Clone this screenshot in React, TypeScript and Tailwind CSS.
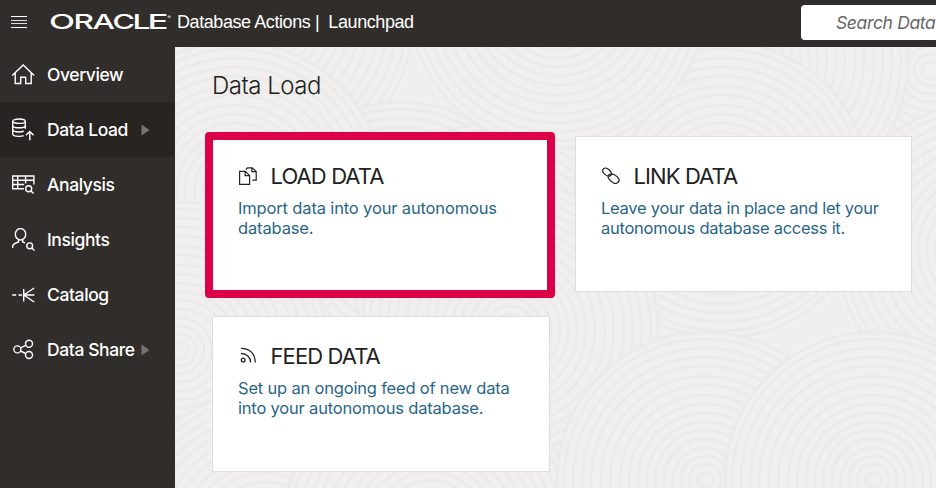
import type { ReactNode } from 'react';

const RINGS = [8, 16, 24, 32, 41, 50, 58, 67, 76, 85, 95, 104, 114, 123, 132, 141];

const SWIRLS = [
  { x: 265, y: 20 }, { x: 400, y: 250 }, { x: 235, y: 190 }, { x: 930, y: 70 },
  { x: 760, y: 60 }, { x: 500, y: 270 }, { x: 722, y: 190 },
  { x: 557, y: 0 }, { x: 985, y: 250 }, { x: 180, y: 350 }, { x: 510, y: 330 }, { x: 265, y: 540 },
  { x: 430, y: 530 }, { x: 705, y: 480 }, { x: 873, y: 480 },
];

function Backdrop() {
  return (
    <svg className="absolute inset-0 h-full w-full" viewBox="175 47 761 441" fill="#f0efed" stroke="#ebeae8" strokeWidth="2.500" aria-hidden="true">
      {SWIRLS.map((s) => (
        <g key={`${s.x}-${s.y}`}>
          <circle cx={s.x} cy={s.y} r="148" />
          {RINGS.map((r) => (
            <circle key={r} cx={s.x} cy={s.y} r={r} fill="none" />
          ))}
        </g>
      ))}
    </svg>
  );
}

function Icon({ children, size = 24, width = 1.4 }: { children: ReactNode; size?: number; width?: number }) {
  return (
    <svg width={size} height={size} viewBox={`0 0 ${size} ${size}`} fill="none" stroke="currentColor" strokeWidth={width} className="shrink-0" aria-hidden="true">
      {children}
    </svg>
  );
}

const icons = {
  overview: (
    <Icon><path d="M1.200 12.500 12.200 2l11 10.500M4.200 10v10.500h5.500v-6.300h5v6.300h5.500V10" /></Icon>
  ),
  load: (
    <Icon>
      <ellipse cx="8" cy="3.200" rx="6.300" ry="2.200" />
      <path d="M1.700 3.200v12.600c0 1.600 2.600 2.600 6.300 2.600 1.800 0 3.500-.2 4.600-.7M14.300 3.200v7.600M1.700 7.400c0 1.400 2.600 2.400 6.300 2.400s6.300-1 6.300-2.400M1.700 11.600c0 1.400 2.600 2.400 6.300 2.400 2 0 3.700-.3 4.800-.8M18.800 22.300v-8.500M15 17.200l3.800-3.700 3.800 3.700" />
    </Icon>
  ),
  analysis: (
    <Icon>
      <path d="M13 15.700H1.700V3h21.200v8.500M1.700 7.200h21.200M1.700 11.500h11.400M6.700 3v12.700M14.600 3v7.500" />
      <circle cx="17.700" cy="15.700" r="3" /><path d="m19.900 17.900 2.700 2.700" />
    </Icon>
  ),
  insights: (
    <Icon>
      <ellipse cx="9.500" cy="6.300" rx="5.200" ry="5.700" />
      <path d="M1.700 20v-1.700c0-1.900 2-3.100 5.800-4.300v-2.400M11.700 11.600v2.400l2.300.9" />
      <circle cx="18.700" cy="17.800" r="2.900" /><path d="m20.800 19.900 2.700 2.600" />
    </Icon>
  ),
  catalog: (
    <Icon><path d="M1.200 12h4M7.500 12h3.500M12.700 6v12.500M12.700 12h10.700M23.200 5l-10.400 7 10.400 7" /></Icon>
  ),
  share: (
    <Icon>
      <circle cx="6.400" cy="11.400" r="3.500" /><circle cx="18" cy="5.700" r="3.500" /><circle cx="18" cy="17" r="3.500" />
      <path d="m9.500 9.900 5.200-2.600M9.500 13l5.200 2.500" />
    </Icon>
  ),
  files: (
    <Icon size={20} width={1.2}>
      <path d="M1.600 5.400h5.700l4.300 4v8.900h-10zM7.100 5.400v4.300h4.500M8 3.500 9.500 1.800h4.700l4 3.600v8.800h-4M13.900 1.800v3.900h4.300" />
    </Icon>
  ),
  link: (
    <Icon size={20} width={1.200}>
      <path d="M7.800 9.700 6.500 9.600C5.400 9.400 1.700 6.500 1.600 5 1.400 2.700 3.500 1 5.700 2c1.300.6 4 3 4.600 4.100 1 2-.8 3.900-2.600 3.700" transform="translate(0 .3)" />
      <path d="M10.500 8.500c-2.600-.8-4.700 1.500-3.700 3.600.7 1.400 3.800 4.200 5.200 5 3.200 1.800 6.600-1.300 5.300-4-.7-1.400-3.200-3.500-4.400-4.100-.8-.5-1.700-.7-2.400-.5Z" transform="translate(.5 -.2)" />
    </Icon>
  ),
  feed: (
    <Icon size={20} width={1.300}>
      <circle cx="5.200" cy="14" r="1.900" />
      <path d="M3 7.500c5.600 0 9.600 3.700 9.600 9M3 2.300c8.800 0 14.300 5.500 14.300 14.200" />
    </Icon>
  ),
};

const NAV = [
  { label: 'Overview', icon: icons.overview },
  { label: 'Data Load', icon: icons.load, active: true, arrow: true, spacing: 'gap-[13px]' },
  { label: 'Analysis', icon: icons.analysis },
  { label: 'Insights', icon: icons.insights },
  { label: 'Catalog', icon: icons.catalog },
  { label: 'Data Share', icon: icons.share, arrow: true, spacing: 'gap-1.5' },
];

const CARDS = [
  { title: 'LOAD DATA', icon: icons.files, tracking: 'tracking-[-0.150px]', lines: ['Import data into your autonomous', 'database.'], marked: true },
  { title: 'LINK DATA', icon: icons.link, tracking: 'tracking-[-0.260px]', lines: ['Leave your data in place and let your', 'autonomous database access it.'] },
  { title: 'FEED DATA', icon: icons.feed, tracking: 'tracking-[-0.190px]', lines: ['Set up an ongoing feed of new data', 'into your autonomous database.'] },
];

function Header() {
  return (
    <header className="flex h-[47px] shrink-0 items-start overflow-hidden bg-[#312d2a] text-white">
      <div className="mt-4 ml-[11px] flex w-[16px] shrink-0 flex-col gap-[2.700px]">
        <i className="h-px bg-white" /><i className="h-px bg-[#dddddd]" /><i className="h-px bg-[#dddddd]" /><i className="h-px bg-white" />
      </div>
      <svg width="124" height="30" viewBox="0 0 124 30" className="mt-[7px] ml-[22px] shrink-0 fill-white" aria-label="Oracle">
        <text y="22" fontFamily="Inter, sans-serif" fontSize="20.500" fontWeight="500">
          <tspan x="0" textLength="26" lengthAdjust="spacingAndGlyphs">O</tspan>
          <tspan x="24.500" textLength="20.500" lengthAdjust="spacingAndGlyphs">R</tspan>
          <tspan x="43.500" textLength="22.500" lengthAdjust="spacingAndGlyphs">A</tspan>
          <tspan x="63.500" textLength="22.500" lengthAdjust="spacingAndGlyphs">C</tspan>
          <tspan x="83.500" textLength="18" lengthAdjust="spacingAndGlyphs">L</tspan>
          <tspan x="98.500" textLength="21" lengthAdjust="spacingAndGlyphs">E</tspan>
        </text>
        <text x="118.500" y="11.500" fontFamily="Inter, sans-serif" fontSize="5">®</text>
      </svg>
      <div className="mt-[10px] ml-1 w-[160px] shrink-0 font-['Liberation_Sans',Arial,sans-serif] text-[18px] leading-6 tracking-[-0.420px] whitespace-pre">Database Actions |  Launchpad</div>
      <div className="mt-[5px] ml-[464px] h-[35px] w-[300px] shrink-0 rounded-[4px] bg-white pl-[35px] font-[Inter,sans-serif] text-[17.500px] leading-[35px] tracking-[-0.350px] text-[#666666] italic">Search Database Actions</div>
    </header>
  );
}

export default function App() {
  return (
    <div className="flex h-[488px] w-[936px] flex-col overflow-hidden font-[Inter,sans-serif]">
      <Header />
      <div className="flex min-h-0 flex-1">
        <nav className="w-[175px] shrink-0 bg-[#312d2a] text-white">
          {NAV.map((item) => (
            <div key={item.label} className={`flex h-[55px] items-center pl-[11px] ${item.active ? 'bg-[#282422]' : ''}`}>
              {item.icon}
              <div className={`ml-3 flex items-center ${item.spacing ?? ''}`}>
                <span className="pt-[2px] text-[17.500px] font-medium tracking-[-0.400px] whitespace-nowrap">{item.label}</span>
                {item.arrow && <svg width="9" height="12" viewBox="0 0 9 12" className="fill-[#77736f]"><path d="M0.500 0.500 8.500 6l-8 5.500z" /></svg>}
              </div>
            </div>
          ))}
        </nav>
        <main className="relative flex-1 overflow-hidden bg-[#f0efed]">
          <Backdrop />
          <div className="relative pt-[22px] pl-[37px]">
            <h1 className="h-[67px] text-[24px] leading-[34px] font-light tracking-[-0.500px] text-[#222222]">Data Load</h1>
            <div className="grid w-[700px] grid-cols-[338px_337px] gap-x-[25px] gap-y-6">
              {CARDS.map((card) => (
                <section key={card.title} className="relative h-[156px] border border-[#dedddd] bg-white pt-[25px] pl-[25px]">
                  <div className="flex h-[28px] items-center text-[#222222]">
                    {card.icon}
                    <h2 className="ml-[12.500px] text-[22px] leading-7 tracking-[-0.900px]">{card.title}</h2>
                  </div>
                  <p className={`mt-[8px] text-[16.500px] leading-5 whitespace-nowrap text-[#2a6688] ${card.tracking}`}>
                    {card.lines[0]}<br />{card.lines[1]}
                  </p>
                  {card.marked && <div className="absolute -top-[5px] -left-[8.500px] h-[166px] w-[350px] rounded-[4px] border-8 border-[#dc004b]" />}
                </section>
              ))}
            </div>
          </div>
        </main>
      </div>
    </div>
  );
}
